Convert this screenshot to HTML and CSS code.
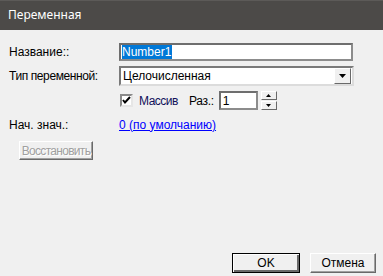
FILE: index.html
```html
<!DOCTYPE html>
<html lang="ru">
<head>
<meta charset="UTF-8">
<title>Переменная</title>
<link rel="stylesheet" href="styles.css">
</head>
<body>
  <div class="dialog">
    <div class="titlebar">Переменная</div>

    <div class="form">
      <div class="row row-name">
        <span class="label">Название::</span>
        <div class="textbox name-box"><span class="selected">Number1</span></div>
      </div>

      <div class="row row-type">
        <span class="label label-tight">Тип переменной:</span>
        <div class="combo">
          <span class="combo-text">Целочисленная</span>
          <span class="combo-btn">
            <svg width="9" height="5" viewBox="0 0 9 5"><path d="M1 0h7L4.5 4z" fill="#000"/></svg>
          </span>
        </div>
      </div>

      <div class="row row-array">
        <span class="label"></span>
        <span class="checkbox">
          <svg width="9" height="9" viewBox="0 0 9 9"><path d="M1 4l2 2.5L8 1" stroke="#000" stroke-width="2" fill="none"/></svg>
        </span>
        <span class="check-label">Массив</span>
        <span class="size-label">Раз.:</span>
        <div class="textbox size-box">1</div>
        <div class="spin">
          <span class="spin-btn">
            <svg width="5" height="3" viewBox="0 0 5 3"><path d="M2.5 0L5 3H0z" fill="#000"/></svg>
          </span>
          <span class="spin-btn">
            <svg width="5" height="3" viewBox="0 0 5 3"><path d="M0 0h5L2.5 3z" fill="#000"/></svg>
          </span>
        </div>
      </div>

      <div class="row row-init">
        <span class="label">Нач. знач.:</span>
        <a class="link" href="#">0 (по умолчанию)</a>
      </div>

      <div class="row row-restore">
        <button class="btn btn-disabled" disabled>Восстановить</button>
      </div>
    </div>

    <div class="footer">
      <button class="btn btn-default">OK</button>
      <button class="btn">Отмена</button>
    </div>
  </div>
</body>
</html>
```

FILE: styles.css
```css
* {
  box-sizing: border-box;
  margin: 0;
  padding: 0;
}

body {
  font-family: "Liberation Sans", Arial, sans-serif;
  font-size: 12px;
  color: #000;
  background-color: #f0f0f0;
}

.dialog {
  width: 383px;
  height: 276px;
  display: flex;
  flex-direction: column;
  background-color: #f0f0f0;
}

/* Title bar */

.titlebar {
  height: 30px;
  background-color: #4c4a48;
  border-top: 1px solid #5c5a58;
  color: #fff;
  font-family: "Noto Sans", sans-serif;
  font-size: 12px;
  line-height: 28px;
  padding-left: 8px;
}

/* Form rows */

.form {
  padding: 13px 0 0 9px;
}

.row {
  display: flex;
  align-items: center;
}

.label {
  width: 110px;
  flex-shrink: 0;
}

.label-tight {
  letter-spacing: -0.4px;
}

.row-name {
  height: 18px;
}

.row-type {
  height: 20px;
  margin-top: 5px;
}

.row-array {
  height: 19px;
  margin-top: 5px;
}

.row-init {
  height: 15px;
  margin-top: 7px;
}

.row-restore {
  margin-top: 9px;
  padding-left: 10px;
}

/* Inputs */

.textbox {
  background-color: #fff;
  border: 2px solid #6e6e6e;
  border-right-color: #8c8c8c;
  border-bottom-color: #8c8c8c;
  display: flex;
  align-items: center;
  padding-left: 1px;
}

.name-box {
  width: 234px;
  height: 18px;
}

.selected {
  background-color: #0078d7;
  color: #fff;
  line-height: 14px;
  padding-right: 1px;
}

.combo {
  width: 235px;
  height: 20px;
  background-color: #fff;
  border: 2px solid #7a7a7a;
  border-right-color: #dcdcdc;
  border-bottom-color: #dcdcdc;
  display: flex;
  align-items: center;
  justify-content: space-between;
  padding-left: 2px;
}

.combo-btn {
  width: 17px;
  height: 16px;
  background-color: #f0f0f0;
  border: 1px solid #fff;
  border-right-color: #696969;
  border-bottom-color: #696969;
  display: flex;
  align-items: center;
  justify-content: center;
  margin-right: 1px;
}

/* Array row */

.checkbox {
  width: 13px;
  height: 13px;
  margin-left: 1px;
  background-color: #fff;
  border: 2px solid #8a8a8a;
  border-right-color: #e6e6e6;
  border-bottom-color: #e6e6e6;
  display: flex;
  align-items: center;
  justify-content: center;
}

.check-label {
  margin-left: 6px;
  letter-spacing: -0.5px;
  color: #10105a;
}

.size-label {
  margin-left: 11px;
  letter-spacing: -0.3px;
}

.size-box {
  width: 39px;
  height: 19px;
  margin-left: 5px;
  padding-left: 2px;
}

.spin {
  display: flex;
  flex-direction: column;
  margin-left: 3px;
  height: 19px;
}

.spin-btn {
  width: 16px;
  height: 9px;
  background-color: #f0f0f0;
  border: 1px solid #fff;
  border-right-color: #696969;
  border-bottom-color: #696969;
  display: flex;
  align-items: center;
  justify-content: center;
}

.spin-btn + .spin-btn {
  margin-top: 1px;
}

/* Link */

.link {
  color: #0000ff;
  text-decoration: underline;
}

/* Buttons */

.btn {
  font-family: "Liberation Sans", Arial, sans-serif;
  font-size: 12px;
  height: 20px;
  padding: 0;
  background-color: #f0f0f0;
  border: 1px solid #fff;
  border-right-color: #696969;
  border-bottom-color: #696969;
  box-shadow: inset -1px -1px 0 #a0a0a0;
  color: #000;
}

.btn-disabled {
  width: 74px;
  height: 19px;
  color: #a0a0a0;
  text-shadow: 1px 1px 0 #fff;
  letter-spacing: -0.7px;
}

.footer {
  margin-top: auto;
  display: flex;
  justify-content: flex-end;
  gap: 10px;
  padding: 0 7px 3px 0;
}

.footer .btn {
  width: 66px;
}

.footer .btn-default {
  width: 68px;
  border: 1px solid #000;
  box-shadow: inset 1px 1px 0 #fff, inset -2px -2px 0 #696969;
}
```
